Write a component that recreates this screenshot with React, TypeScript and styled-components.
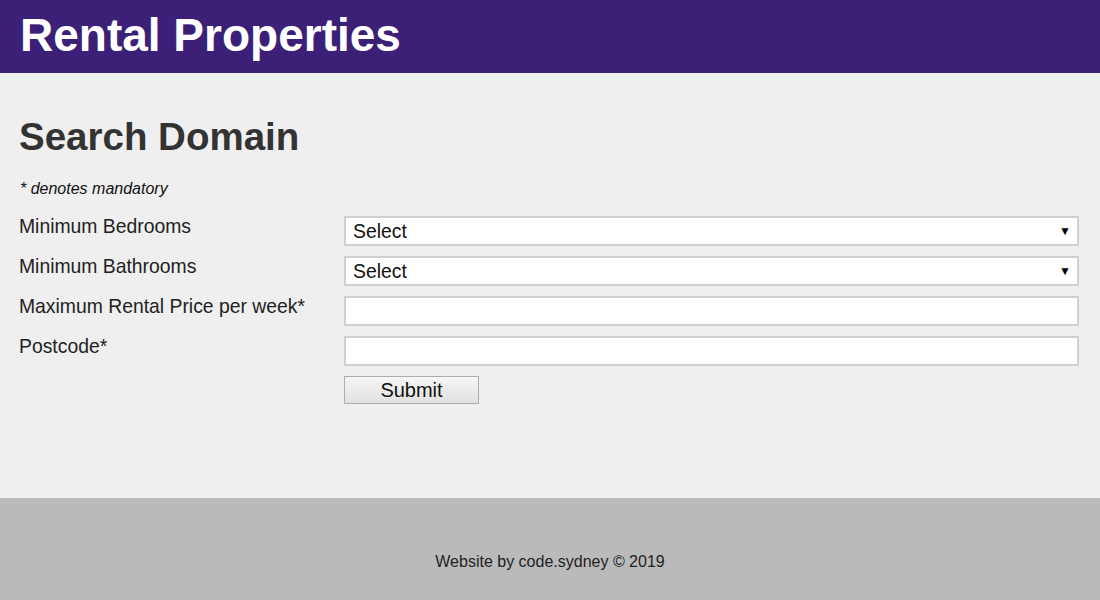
import React from "react";
import styled, { createGlobalStyle } from "styled-components";

const Global = createGlobalStyle`
  html, body { margin: 0; padding: 0; }
  body { font-family: "Liberation Sans", Arial, sans-serif; background: #efefef; color: #222; }
  * { box-sizing: border-box; }
`;

const Page = styled.div`
  display: flex;
  flex-direction: column;
  min-height: 600px;
`;

const Header = styled.header`
  background: #3c1f77;
  height: 73px;
  padding: 0 20px 4px;
  display: flex;
  align-items: center;
`;

const Brand = styled.h1`
  margin: 0;
  color: #fff;
  font-size: 46px;
  font-weight: bold;
  line-height: 1;
`;

const Main = styled.main`
  padding: 42px 21px 0 19px;
  height: 425px;
`;

const Title = styled.h2`
  margin: 0;
  font-size: 38.5px;
  font-weight: bold;
  color: #333;
  line-height: 44px;
`;

const Note = styled.p`
  margin: 21px 0 18px 1px;
  font-size: 16px;
  font-style: italic;
  color: #111;
  line-height: 18px;
`;

const Form = styled.form`
  display: grid;
  grid-template-columns: 325px 1fr;
  row-gap: 10px;
`;

const Label = styled.label`
  font-size: 19.35px;
  color: #222;
  line-height: 20px;
`;

const SelectWrap = styled.div`
  position: relative;
  &::after {
    content: "▼";
    position: absolute;
    right: 8px;
    top: 8px;
    font-size: 12px;
    color: #000;
    pointer-events: none;
  }
`;

const Select = styled.select`
  appearance: none;
  -webkit-appearance: none;
  width: 100%;
  height: 30px;
  border: 2px solid #d0d0d0;
  border-radius: 0;
  background: #fff;
  font-family: "Liberation Sans", Arial, sans-serif;
  font-size: 19.35px;
  color: #111;
  padding: 0 7px;
  outline: none;
`;

const Input = styled.input`
  width: 100%;
  height: 30px;
  border: 2px solid #d0d0d0;
  border-radius: 0;
  background: #fff;
  font-family: "Liberation Sans", Arial, sans-serif;
  font-size: 19.35px;
  padding: 0 7px;
  outline: none;
`;

const Button = styled.button`
  width: 135px;
  height: 28px;
  border: 1px solid #adadad;
  border-radius: 0;
  background: linear-gradient(#f6f6f6, #e1e1e1);
  font-family: "Liberation Sans", Arial, sans-serif;
  font-size: 20px;
  color: #111;
  padding: 0;
`;

const Footer = styled.footer`
  background: #bababa;
  height: 102px;
  display: flex;
  align-items: center;
  justify-content: center;
  padding-top: 26px;
  font-size: 16px;
  color: #222;
`;

const Spacer = styled.div``;

export default function App() {
  return (
    <Page>
      <Global />
      <Header>
        <Brand>Rental Properties</Brand>
      </Header>
      <Main>
        <Title>Search Domain</Title>
        <Note>* denotes mandatory</Note>
        <Form onSubmit={(e) => e.preventDefault()}>
          <Label>Minimum Bedrooms</Label>
          <SelectWrap>
            <Select defaultValue="">
              <option value="">Select</option>
              <option>1</option>
              <option>2</option>
              <option>3</option>
            </Select>
          </SelectWrap>
          <Label>Minimum Bathrooms</Label>
          <SelectWrap>
            <Select defaultValue="">
              <option value="">Select</option>
              <option>1</option>
              <option>2</option>
            </Select>
          </SelectWrap>
          <Label>Maximum Rental Price per week*</Label>
          <Input type="text" />
          <Label>Postcode*</Label>
          <Input type="text" />
          <Spacer />
          <div>
            <Button type="submit">Submit</Button>
          </div>
        </Form>
      </Main>
      <Footer>Website by code.sydney © 2019</Footer>
    </Page>
  );
}
